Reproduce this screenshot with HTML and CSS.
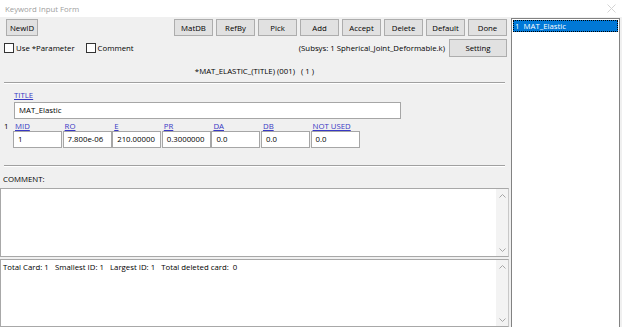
FILE: index.html
```html
<!DOCTYPE html>
<html lang="en">
<head>
    <meta charset="UTF-8">
    <title>Keyword Input Form</title>
    <link rel="stylesheet" href="styles.css">
</head>
<body>
    <div class="titlebar">
        <span class="caption">Keyword Input Form</span>
        <svg class="close" width="9" height="9" viewBox="0 0 9 9"><path d="M0.5 0.5L8.5 8.5M8.5 0.5L0.5 8.5" stroke="#d4d4d4" stroke-width="1"/></svg>
    </div>
    <div class="window">
        <div class="form">
            <div class="toolbar">
                <button class="btn newid">NewID</button>
                <div class="btn-group">
                    <button class="btn">MatDB</button>
                    <button class="btn">RefBy</button>
                    <button class="btn">Pick</button>
                    <button class="btn">Add</button>
                    <button class="btn">Accept</button>
                    <button class="btn">Delete</button>
                    <button class="btn">Default</button>
                    <button class="btn">Done</button>
                </div>
            </div>
            <div class="options">
                <label class="check"><span class="box"></span>Use *Parameter</label>
                <label class="check"><span class="box"></span>Comment</label>
                <span class="subsys">(Subsys: 1 Spherical_Joint_Deformable.k)</span>
                <button class="btn setting">Setting</button>
            </div>
            <div class="keyword">*MAT_ELASTIC_(TITLE) (001) &nbsp;&nbsp;( 1 )</div>
            <div class="divider"></div>
            <div class="card">
                <div class="field-label"><a>TITLE</a></div>
                <div class="input title-input">MAT_Elastic</div>
                <div class="row">
                    <span class="row-num">1</span>
                    <div class="cell"><a>MID</a><div class="input">1</div></div>
                    <div class="cell"><a>RO</a><div class="input">7.800e-06</div></div>
                    <div class="cell"><a>E</a><div class="input">210.00000</div></div>
                    <div class="cell"><a>PR</a><div class="input">0.3000000</div></div>
                    <div class="cell"><a>DA</a><div class="input">0.0</div></div>
                    <div class="cell"><a>DB</a><div class="input">0.0</div></div>
                    <div class="cell"><a>NOT USED</a><div class="input">0.0</div></div>
                </div>
            </div>
            <div class="divider lower"></div>
            <div class="comment-label">COMMENT:</div>
            <div class="textbox comment">
                <div class="text"></div>
                <div class="scrollbar">
                    <svg width="7" height="4" viewBox="0 0 7 4"><path d="M0.5 3.5L3.5 0.5L6.5 3.5" fill="none" stroke="#a6a6a6"/></svg>
                    <svg width="7" height="4" viewBox="0 0 7 4"><path d="M0.5 0.5L3.5 3.5L6.5 0.5" fill="none" stroke="#a6a6a6"/></svg>
                </div>
            </div>
            <div class="textbox status">
                <div class="text">Total Card: 1 &nbsp;&nbsp;Smallest ID: 1 &nbsp;&nbsp;Largest ID: 1 &nbsp;&nbsp;Total deleted card: &nbsp;0</div>
                <div class="scrollbar">
                    <svg width="7" height="4" viewBox="0 0 7 4"><path d="M0.5 3.5L3.5 0.5L6.5 3.5" fill="none" stroke="#a6a6a6"/></svg>
                    <svg width="7" height="4" viewBox="0 0 7 4"><path d="M0.5 0.5L3.5 3.5L6.5 0.5" fill="none" stroke="#a6a6a6"/></svg>
                </div>
            </div>
        </div>
        <div class="list">
            <div class="item selected">1 &nbsp;MAT_Elastic</div>
        </div>
    </div>
</body>
</html>
```

FILE: styles.css
```css
body {
    margin: 0;
    width: 622px;
    height: 327px;
    overflow: hidden;
    background: #f0f0f0;
    font-family: 'Open Sans', 'Noto Sans', sans-serif;
    font-size: 7.8px;
    color: #000;
}
.titlebar {
    height: 17px;
    background: #fff;
    display: flex;
    align-items: center;
    justify-content: space-between;
    padding: 0 6px 0 5px;
}
.caption {
    color: #a0a0a0;
}
.window {
    display: flex;
    height: 310px;
}
.form {
    width: 509px;
    display: flex;
    flex-direction: column;
}
.btn {
    height: 17px;
    width: 39px;
    padding: 0;
    background: #e1e1e1;
    border: 1px solid #adadad;
    font-family: 'Open Sans', 'Noto Sans', sans-serif;
    font-size: 7.8px;
    color: #000;
}
.toolbar {
    display: flex;
    justify-content: space-between;
    padding: 2px 2px 0 6px;
}
.newid { width: 32px; }
.btn-group {
    display: flex;
    gap: 3px;
}
.options {
    display: flex;
    align-items: center;
    height: 18px;
    margin-top: 3px;
    padding: 0 2px 0 4px;
}
.check {
    display: flex;
    align-items: center;
    margin-right: 11px;
}
.box {
    width: 8px;
    height: 8px;
    border: 1px solid #333;
    background: #fff;
    margin-right: 2px;
}
.subsys {
    margin-left: auto;
    margin-right: 4px;
}
.btn.setting {
    width: 58px;
    height: 18px;
}
.keyword {
    text-align: center;
    margin-top: 8px;
    height: 12px;
    line-height: 12px;
}
.divider {
    margin: 5px 4px 0 4px;
    border-top: 1px solid #a0a0a0;
    border-bottom: 1px solid #fff;
}
.card {
    padding: 5px 0 0 14px;
}
.field-label a, .cell a {
    color: #3838c4;
    text-decoration: underline;
    line-height: 12px;
    display: block;
    white-space: nowrap;
}
.input {
    background: #fff;
    border: 1px solid #a6a6a6;
    height: 17px;
    line-height: 15px;
    padding-left: 4px;
    box-sizing: border-box;
    white-space: nowrap;
    overflow: hidden;
}
.title-input {
    width: 387px;
    margin-top: 1px;
}
.row {
    display: flex;
    margin-top: 2px;
    position: relative;
}
.row-num {
    position: absolute;
    left: -10px;
    top: 0;
    line-height: 10px;
}
.field-label a {
    line-height: 12px;
}
.cell a {
    line-height: 10px;
    padding-left: 1px;
}
.cell {
    width: 48px;
    margin-right: 1.6px;
}
.cell .input {
    margin-left: -1px;
}
.divider.lower {
    margin-top: 17px;
}
.comment-label {
    padding: 6px 0 0 3px;
    height: 12px;
    line-height: 12px;
}
.textbox {
    display: flex;
    background: #fff;
    border: 1px solid #a8a8a8;
    border-right-color: #c8c8c8;
}
.comment {
    margin-top: 3px;
    height: 67px;
}
.status {
    margin-top: 2px;
    height: 66px;
}
.textbox .text {
    flex: 1;
    padding: 2px 0 0 2px;
}
.scrollbar {
    width: 12px;
    background: #f3f3f3;
    display: flex;
    flex-direction: column;
    justify-content: space-between;
    align-items: center;
    padding: 5px 0 4px 0;
}
.list {
    margin: 1px 0 0 2px;
    width: 105px;
    height: 306px;
    background: #fff;
    border: 1px solid #828282;
    padding: 1px;
}
.item {
    height: 12px;
    line-height: 12px;
    padding-left: 2px;
    color: #fff;
}
.item.selected {
    background: #0078d7;
    outline: 1px dotted #000;
    outline-offset: -1px;
}
```
